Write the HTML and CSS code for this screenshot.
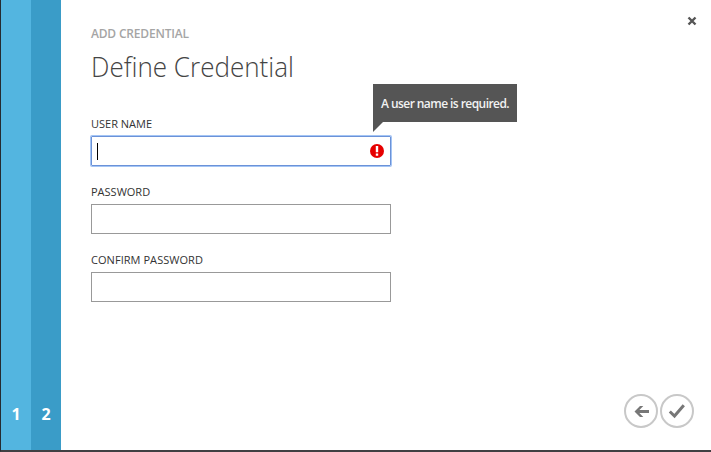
FILE: index.html
```
<!DOCTYPE html>
<html lang="en">
<head>
<meta charset="utf-8">
<title>Define Credential</title>
<link rel="stylesheet" href="styles.css">
</head>
<body>
<div class="wizard">
  <nav class="steps">
    <div class="step">1</div>
    <div class="step current">2</div>
  </nav>
  <main class="panel">
    <svg class="close" viewBox="0 0 10 10"><path d="M1.5 1.5 8.5 8.5M8.5 1.5 1.5 8.5"/></svg>
    <div class="eyebrow">ADD CREDENTIAL</div>
    <h1>Define Credential</h1>
    <form class="fields">
      <div class="field">
        <label>USER NAME</label>
        <div class="input focused">
          <span class="caret"></span>
          <svg class="error" viewBox="0 0 14 14"><circle cx="7" cy="7" r="7"/><path d="M5.8 2h2.4v6.3H5.8zM5.8 9.6h2.4v2.2H5.8z"/></svg>
          <div class="tooltip">A user name is required.</div>
        </div>
      </div>
      <div class="field">
        <label>PASSWORD</label>
        <div class="input"></div>
      </div>
      <div class="field">
        <label class="confirm-label">CONFIRM PASSWORD</label>
        <div class="input"></div>
      </div>
    </form>
    <div class="actions">
      <svg viewBox="0 0 34 34"><circle cx="17" cy="17" r="16"/><path class="arrow" d="M10.5 17.5 16 12H19.3L15.4 16H25V19H15.4L19.3 23H16Z"/></svg>
      <svg viewBox="0 0 34 34"><circle cx="17" cy="17" r="16"/><path class="check" d="M9.8 17.5 14.5 22 23.8 11.3"/></svg>
    </div>
  </main>
</div>
</body>
</html>
```
FILE: styles.css
```
* { box-sizing: border-box; }
body {
  margin: 0;
  background: #fff;
  font-family: "Open Sans", "Noto Sans", sans-serif;
  color: #333;
}
.wizard {
  display: flex;
  width: 711px;
  height: 452px;
  border-left: 1px solid #252b30;
  border-bottom: 2px solid #404043;
}
.steps { display: flex; }
.step {
  display: flex;
  align-items: flex-end;
  justify-content: center;
  width: 30px;
  padding-bottom: 26px;
  background: #53b5e0;
  color: #fff;
  font-size: 16px;
  line-height: 20px;
  font-weight: 700;
}
.step.current { background: #3a9cc8; }
.panel {
  position: relative;
  flex: 1;
  display: flex;
  flex-direction: column;
  padding: 25px 17px 22px 30px;
}
.close {
  position: absolute;
  top: 16px;
  right: 14px;
  width: 10px;
  height: 10px;
  fill: none;
  stroke: #555;
  stroke-width: 2.4;
}
.eyebrow {
  height: 18px;
  color: #a5a5a5;
  font-size: 12px;
  line-height: 18px;
  font-weight: 600;
  letter-spacing: -0.18px;
  white-space: nowrap;
}
h1 {
  height: 40px;
  margin: 3px 0 1px;
  color: #444;
  font-size: 28px;
  line-height: 40px;
  font-weight: 300;
  white-space: nowrap;
  transform: scaleX(0.93);
  transform-origin: left;
}
.fields {
  display: flex;
  flex-direction: column;
  gap: 18px;
  width: 300px;
  margin-top: 29px;
}
.field { display: flex; flex-direction: column; }
label {
  align-self: flex-start;
  height: 16px;
  margin-bottom: 4px;
  font-size: 11px;
  line-height: 16px;
  white-space: nowrap;
}
.confirm-label { letter-spacing: 0.05px; }
.input {
  position: relative;
  display: flex;
  align-items: center;
  justify-content: space-between;
  height: 30px;
  padding: 0 6px 0 5px;
  border: 1px solid #999;
}
.input.focused {
  border-color: #6b92d8;
  box-shadow: 0 0 0 1px #a4c5f5;
  border-radius: 1px;
}
.caret { width: 1px; height: 17px; background: #000; }
.error { width: 14px; height: 14px; fill: #e60000; }
.error path { fill: #fff; }
.tooltip {
  position: absolute;
  left: 281px;
  top: -53px;
  width: 144px;
  height: 38px;
  padding-left: 8px;
  background: #555;
  color: #f2f2f2;
  font-size: 12px;
  line-height: 39px;
  font-weight: 600;
  letter-spacing: -0.56px;
  white-space: nowrap;
}
.tooltip::after {
  content: "";
  position: absolute;
  left: 0;
  top: 38px;
  border-top: 10px solid #555;
  border-right: 10px solid transparent;
}
.actions {
  display: flex;
  justify-content: flex-end;
  gap: 2px;
  margin-top: auto;
}
.actions svg { width: 34px; height: 34px; }
.actions circle { fill: #fff; stroke: #c8c8c8; stroke-width: 2; }
.arrow { fill: #777; }
.check { fill: none; stroke: #777; stroke-width: 3; }
```
